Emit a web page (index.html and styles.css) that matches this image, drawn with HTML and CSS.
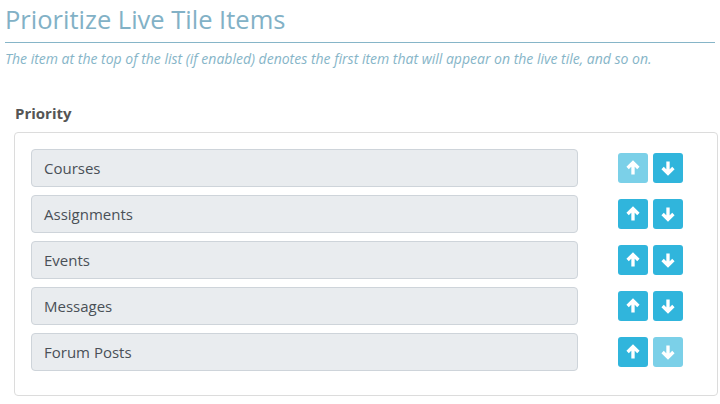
FILE: index.html
```html
<!DOCTYPE html>
<html>
<head>
<meta charset="utf-8">
<link rel="stylesheet" href="styles.css">
</head>
<body>
<h1 class="title">Prioritize Live Tile Items</h1>
<p class="subtitle">The item at the top of the list (if enabled) denotes the first item that will appear on the live tile, and so on.</p>
<div class="label">Priority</div>
<div class="panel">
  <div class="row">
    <div class="field">Courses</div>
    <div class="btns">
      <button class="btn disabled"><svg viewBox="0 0 14 14"><path d="M7 12V3M2.8 7L7 2.8 11.2 7"/></svg></button>
      <button class="btn"><svg viewBox="0 0 14 14"><path d="M7 2v9M2.8 7L7 11.2 11.2 7"/></svg></button>
    </div>
  </div>
  <div class="row">
    <div class="field">Assignments</div>
    <div class="btns">
      <button class="btn"><svg viewBox="0 0 14 14"><path d="M7 12V3M2.8 7L7 2.8 11.2 7"/></svg></button>
      <button class="btn"><svg viewBox="0 0 14 14"><path d="M7 2v9M2.8 7L7 11.2 11.2 7"/></svg></button>
    </div>
  </div>
  <div class="row">
    <div class="field">Events</div>
    <div class="btns">
      <button class="btn"><svg viewBox="0 0 14 14"><path d="M7 12V3M2.8 7L7 2.8 11.2 7"/></svg></button>
      <button class="btn"><svg viewBox="0 0 14 14"><path d="M7 2v9M2.8 7L7 11.2 11.2 7"/></svg></button>
    </div>
  </div>
  <div class="row">
    <div class="field">Messages</div>
    <div class="btns">
      <button class="btn"><svg viewBox="0 0 14 14"><path d="M7 12V3M2.8 7L7 2.8 11.2 7"/></svg></button>
      <button class="btn"><svg viewBox="0 0 14 14"><path d="M7 2v9M2.8 7L7 11.2 11.2 7"/></svg></button>
    </div>
  </div>
  <div class="row">
    <div class="field">Forum Posts</div>
    <div class="btns">
      <button class="btn"><svg viewBox="0 0 14 14"><path d="M7 12V3M2.8 7L7 2.8 11.2 7"/></svg></button>
      <button class="btn disabled"><svg viewBox="0 0 14 14"><path d="M7 2v9M2.8 7L7 11.2 11.2 7"/></svg></button>
    </div>
  </div>
</div>
</body>
</html>
```

FILE: styles.css
```css
* { box-sizing: border-box; }
body {
  margin: 0;
  padding: 0 5px;
  font-family: "Open Sans", "Noto Sans", sans-serif;
  background: #fff;
}
.title {
  margin: 0;
  padding-top: 3px;
  height: 43px;
  font-size: 25.5px;
  font-weight: 400;
  color: #82b1c6;
  border-bottom: 1px solid #86b5c8;
  line-height: 33px;
}
.subtitle {
  margin: 6px 0 0 0;
  font-size: 14px;
  font-style: italic;
  color: #86b5c8;
  line-height: 20px;
}
.label {
  margin: 34px 0 0 10px;
  font-size: 15px;
  font-weight: 700;
  color: #555;
  line-height: 20px;
}
.panel {
  margin: 9px -3px 0 9px;
  border: 1px solid #dcdcdc;
  border-radius: 4px;
  padding: 16px 34px 16px 16px;
  height: 264px;
}
.row {
  display: flex;
  align-items: center;
  margin-bottom: 8px;
}
.field {
  flex: 1;
  height: 38px;
  background: #e9ecef;
  border: 1px solid #ced4da;
  border-radius: 4px;
  padding: 0 12px;
  font-size: 15px;
  color: #495057;
  line-height: 36px;
  margin-right: 40px;
}
.btns {
  display: flex;
  gap: 5px;
}
.btn {
  width: 30px;
  height: 30px;
  border: none;
  padding: 0;
  border-radius: 3px;
  background: #30b5dc;
  display: flex;
  align-items: center;
  justify-content: center;
}
.btn.disabled {
  background: #7bd0e8;
}
.btn svg {
  width: 18px;
  height: 18px;
  fill: none;
  stroke: #fff;
  stroke-width: 2.6;
  stroke-linecap: butt;
  stroke-linejoin: miter;
}
```
